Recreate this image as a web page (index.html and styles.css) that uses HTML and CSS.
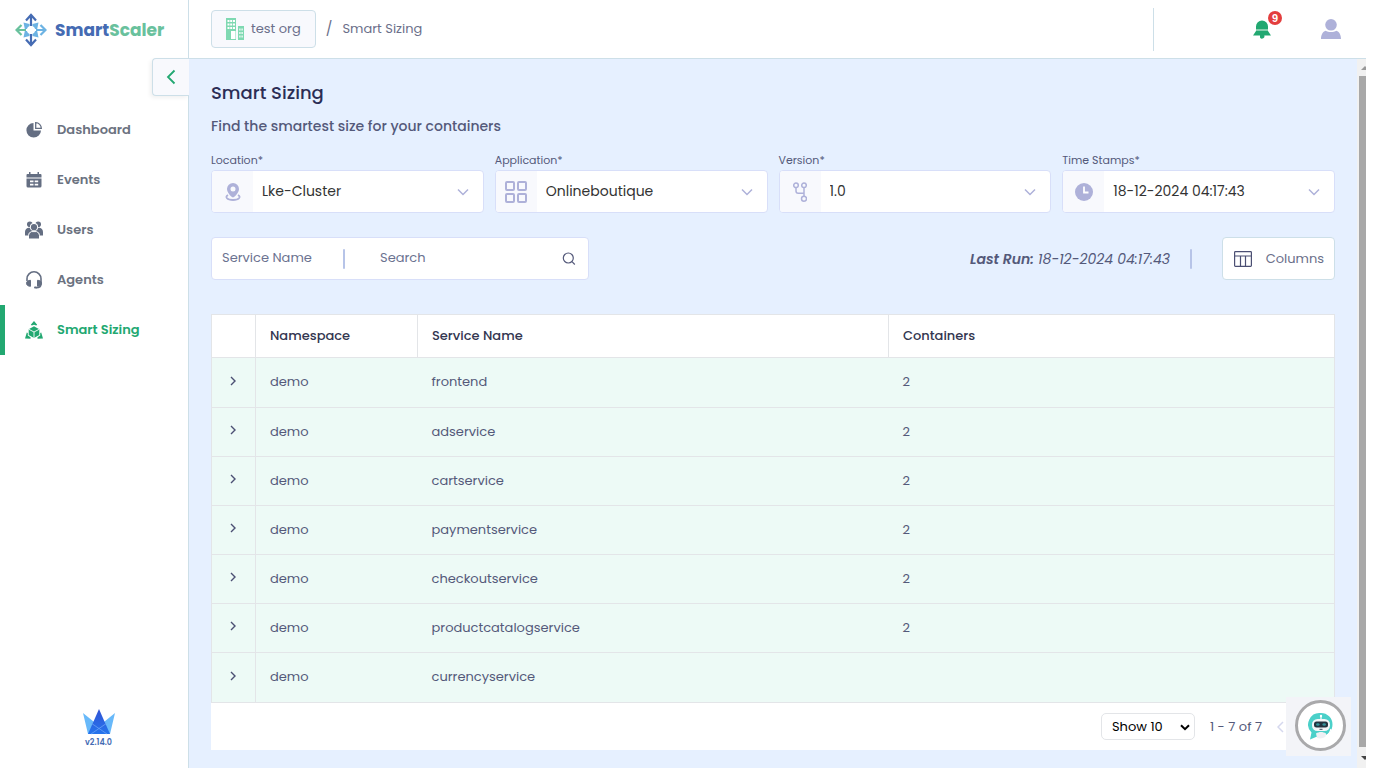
FILE: index.html
```html
<!DOCTYPE html>
<html lang="en">
<head>
<meta charset="utf-8">
<title>SmartScaler - Smart Sizing</title>
<link rel="stylesheet" href="styles.css">
</head>
<body>
<div class="app">
  <aside class="sidebar">
    <a class="logo" href="#">
      <svg width="32" height="34" viewBox="0 0 32 34" fill="none" stroke-width="2.2">
        <path fill="#6db3e3" d="M8.500 9.500l6 1.500v3l-2.500 2H9.800zM23.500 9.500l-6 1.500v3l2.500 2h2.200zM8.500 24.500l6-1.500v-3L12 18H9.800zM23.500 24.500l-6-1.500v-3l2.500-2h2.200z"/>
        <circle cx="16" cy="17" r="4" fill="#fff"/>
        <path stroke="#456bb3" d="M16 13V2M11 7.500l5-5.500 5 5.500M16 21v11M11 26.500l5 5.500 5-5.500"/>
        <path stroke="#69c19d" d="M11 17H1.500M6.500 12l-5 5 5 5"/>
        <path stroke="#6db3e3" d="M21 17h9.500M25.500 12l5 5-5 5"/>
      </svg>
      <span class="logo-text">Smart<span class="logo-accent">Scaler</span></span>
    </a>
    <nav class="nav">
      <a class="nav-item" href="#">
        <svg width="18" height="18" viewBox="0 0 18 18"><path fill="#646e82" d="M8.500 2v7.500H16A7.300 7.300 0 1 1 8.500 2z"/><path fill="none" stroke="#646e82" stroke-width="1.300" d="M10.700 1.700v5.600h5.600a5.600 5.600 0 0 0-5.600-5.600z"/></svg>
        Dashboard</a>
      <a class="nav-item" href="#">
        <svg width="18" height="18" viewBox="0 0 18 18" fill="#646e82"><path d="M4 1h1.500v2h7V1H14v2h1.500a1 1 0 0 1 1 1v2.500h-15V4a1 1 0 0 1 1-1H4z"/><path fill-rule="evenodd" d="M1.500 7.500h15V15a1.500 1.500 0 0 1-1.500 1.500H3A1.500 1.500 0 0 1 1.500 15zM5 9.500v1.800h3.500V9.500zm4.700 0v1.800h3.500V9.500zM5 12.700v1.800h3.500v-1.800zm4.700 0v1.800h3.500v-1.800z"/></svg>
        Events</a>
      <a class="nav-item" href="#">
        <svg width="18" height="18" viewBox="0 0 18 18" fill="#646e82"><circle cx="4.800" cy="3.300" r="2.800"/><circle cx="13.200" cy="3.300" r="2.800"/><path d="M0 14.500V11c0-2.300 1.300-4 3.500-4.300h11C16.700 7 18 8.700 18 11v3.500z"/><circle cx="9" cy="6" r="4.100" fill="#fff"/><circle cx="9" cy="6.200" r="3.100"/><path stroke="#fff" d="M3.500 18v-3.500a4 4 0 0 1 3-3.900h5a4 4 0 0 1 3 3.900V18z"/></svg>
        Users</a>
      <a class="nav-item" href="#">
        <svg width="18" height="18" viewBox="0 0 18 18" fill="none" stroke="#646e82" stroke-width="1.600"><path d="M2 10V7.800a7 7 0 0 1 14 0V13c0 2.500-2 3.700-5 3.700"/><path fill="#646e82" stroke-width="1" d="M5.500 9.300v6C3 15.300 1.500 14 1.500 12.300S3 9.300 5.500 9.300zM12.500 9.300v6c2.500 0 4-1.300 4-3s-1.500-3-4-3z"/><path stroke-width="2" stroke-linecap="round" d="M10 16.600h1"/></svg>
        Agents</a>
      <a class="nav-item active" href="#">
        <svg width="18" height="18" viewBox="0 0 18 18" fill="#22a871"><path d="M9 0l3.200 3.800-1 .7L9 3.800l-2.200.7-1-.7zM1.800 11.500l1 .6v2.500l2.700 1.700v1.500L0 17.500zM16.200 11.500l-1 .6v2.500l-2.700 1.700v1.500l5.500-.3z"/><path d="M9 5.200l5.300 3v5.800L9 17l-5.300-3V8.200z"/><path fill="none" stroke="#fff" stroke-width=".9" d="M3.700 8.200L9 11l5.300-2.800M9 11v6"/></svg>
        Smart Sizing</a>
    </nav>
    <footer class="version">
      <svg width="32" height="26" viewBox="0 0 32 26"><defs><linearGradient id="crown" x1="0" y1="0" x2="0" y2="1"><stop offset="0" stop-color="#3153d5"/><stop offset="1" stop-color="#2675ed"/></linearGradient></defs><path fill="#68b9fa" d="M0 4l16 13L32 4l-5 21H5z"/><path fill="url(#crown)" d="M16 0l11 25H5z"/><path fill="none" stroke="#71a9f7" stroke-width=".7" d="M8 14l16 11M24 14L8 25"/></svg>
      <span>v2.14.0</span>
    </footer>
    <button class="collapse" aria-label="Collapse menu"><svg width="10" height="16" viewBox="0 0 10 16" fill="none" stroke="#22a871" stroke-width="1.800"><path d="M8.500 1.500L2 8l6.500 6.500"/></svg></button>
  </aside>

  <div class="page">
    <header class="topbar">
      <button class="org">
        <svg width="18" height="22" viewBox="0 0 18 22"><path fill="#7fd9b2" d="M0 0h10v22H0zM12 8h6v14h-6z"/><path fill="#fff" d="M1.500 2h2v2h-2zm2.700 0h2v2h-2zM7 2h2v2H7zM1.500 5.500h2v2h-2zm2.700 0h2v2h-2zm2.800 0h2v2H7zM1.500 9h2v2h-2zm2.700 0h2v2h-2zM7 9h2v2H7zm-2 4h4.500v8H5zM13.300 10.500h1.200v2h-1.200zm2.200 0h1.200v2h-1.200zm-2.200 3.500h1.200v2h-1.200zm2.200 0h1.200v2h-1.200zm-2.200 3.500h1.200v2h-1.200zm2.200 0h1.200v2h-1.200z"/></svg>
        test org
      </button>
      <span class="slash">/</span>
      <a class="crumb" href="#">Smart Sizing</a>
      <div class="account">
        <button class="icon-button bell" aria-label="Notifications, 9 unread">
          <svg width="18" height="20" viewBox="0 0 18 20"><path fill="#22a871" d="M3 10V7.500a6 6 0 0 1 12 0V10zM3 12h12l3 4.500H0zM7 16h4a2 2 0 0 1-4 2.500z"/><path fill="#86cfae" d="M3 10h12v2H3z"/></svg>
          <span class="badge">9</span>
        </button>
        <button class="icon-button" aria-label="Account"><svg width="20" height="20" viewBox="0 0 20 20" fill="#aeb1d9"><circle cx="10" cy="5.800" r="5.800"/><path d="M0 20c0-4.500 2-7.500 4.500-8.300 3 1.800 8 1.800 11 0C18 12.500 20 15.500 20 20z"/></svg></button>
      </div>
    </header>

    <div class="viewport">
      <main class="content">
        <h1>Smart Sizing</h1>
        <p class="lead">Find the smartest size for your containers</p>

        <div class="filters">
          <div class="field">
            <label for="location">Location*</label>
            <div class="picker">
              <span class="picker-icon"><svg width="16" height="18" viewBox="0 0 16 18"><path fill="#aeb1d9" fill-rule="evenodd" d="M8 0a6 6 0 0 1 6 6c0 3.200-3.500 7.500-6 8.500C5.500 13.500 2 9.200 2 6a6 6 0 0 1 6-6zm0 3.500a2.500 2.500 0 1 0 0 5 2.500 2.500 0 0 0 0-5z"/><path fill="none" stroke="#aeb1d9" stroke-width="1.800" d="M3 12c-3.500 2-1 5 5 5s8.500-3 5-5"/></svg></span>
              <select id="location"><option>Lke-Cluster</option></select>
              <svg class="chevron" width="12" height="8" viewBox="0 0 12 8"><path d="M1 1.500l5 5 5-5"/></svg>
            </div>
          </div>
          <div class="field">
            <label for="application">Application*</label>
            <div class="picker">
              <span class="picker-icon"><svg width="22" height="22" viewBox="0 0 22 22" fill="none" stroke="#aeb1d9" stroke-width="2"><rect x="1" y="1" width="8" height="8" rx="1"/><rect x="13" y="1" width="8" height="8" rx="1"/><rect x="1" y="13" width="8" height="8" rx="1"/><rect x="13" y="13" width="8" height="8" rx="1"/></svg></span>
              <select id="application"><option>Onlineboutique</option></select>
              <svg class="chevron" width="12" height="8" viewBox="0 0 12 8"><path d="M1 1.500l5 5 5-5"/></svg>
            </div>
          </div>
          <div class="field">
            <label for="version">Version*</label>
            <div class="picker">
              <span class="picker-icon"><svg width="14" height="20" viewBox="0 0 14 20" fill="none" stroke="#aeb1d9" stroke-width="1.500"><circle cx="3" cy="3.300" r="2.300"/><circle cx="11" cy="3.300" r="2.300"/><circle cx="11" cy="16.700" r="2.500"/><path d="M3 5.600V9c0 1.500.8 2.300 2.300 2.300H11M11 5.600v8.500"/></svg></span>
              <select id="version"><option>1.0</option></select>
              <svg class="chevron" width="12" height="8" viewBox="0 0 12 8"><path d="M1 1.500l5 5 5-5"/></svg>
            </div>
          </div>
          <div class="field">
            <label for="stamps">Time Stamps*</label>
            <div class="picker">
              <span class="picker-icon"><svg width="18" height="18" viewBox="0 0 18 18"><circle cx="9" cy="9" r="9" fill="#aeb1d9"/><path fill="none" stroke="#fff" stroke-width="1.800" d="M9 3.500v6h4.500"/></svg></span>
              <select id="stamps"><option>18-12-2024 04:17:43</option></select>
              <svg class="chevron" width="12" height="8" viewBox="0 0 12 8"><path d="M1 1.500l5 5 5-5"/></svg>
            </div>
          </div>
        </div>

        <div class="toolbar">
          <form class="search">
            <select class="search-by" aria-label="Search by"><option>Service Name</option></select>
            <span class="divider"></span>
            <input class="search-input" type="text" placeholder="Search" aria-label="Search">
            <svg width="14" height="14" viewBox="0 0 14 14" fill="none" stroke="#54597a" stroke-width="1.200"><circle cx="6.300" cy="6" r="5"/><path d="M10 9.700l2.800 2.800"/></svg>
          </form>
          <p class="last-run"><strong>Last Run:</strong> 18-12-2024 04:17:43</p>
          <span class="divider"></span>
          <button class="columns">
            <svg width="18" height="16" viewBox="0 0 18 16" fill="none" stroke="#4b4f73" stroke-width="1.200"><rect x=".6" y=".6" width="16.800" height="14.800" rx=".8"/><path d="M.6 5h16.800M6.500 5v10.400M11.500 5v10.400"/></svg>
            Columns
          </button>
        </div>

        <div class="panel">
          <table>
            <colgroup><col class="col-toggle"><col class="col-namespace"><col class="col-service"><col></colgroup>
            <thead><tr><th aria-label="Expand"></th><th>Namespace</th><th>Service Name</th><th>Containers</th></tr></thead>
            <tbody>
              <tr><td><button class="expand" aria-label="Expand frontend"><svg width="6" height="10" viewBox="0 0 6 10"><path d="M1 1l4 4-4 4"/></svg></button></td><td>demo</td><td>frontend</td><td>2</td></tr>
              <tr><td><button class="expand" aria-label="Expand adservice"><svg width="6" height="10" viewBox="0 0 6 10"><path d="M1 1l4 4-4 4"/></svg></button></td><td>demo</td><td>adservice</td><td>2</td></tr>
              <tr><td><button class="expand" aria-label="Expand cartservice"><svg width="6" height="10" viewBox="0 0 6 10"><path d="M1 1l4 4-4 4"/></svg></button></td><td>demo</td><td>cartservice</td><td>2</td></tr>
              <tr><td><button class="expand" aria-label="Expand paymentservice"><svg width="6" height="10" viewBox="0 0 6 10"><path d="M1 1l4 4-4 4"/></svg></button></td><td>demo</td><td>paymentservice</td><td>2</td></tr>
              <tr><td><button class="expand" aria-label="Expand checkoutservice"><svg width="6" height="10" viewBox="0 0 6 10"><path d="M1 1l4 4-4 4"/></svg></button></td><td>demo</td><td>checkoutservice</td><td>2</td></tr>
              <tr><td><button class="expand" aria-label="Expand productcatalogservice"><svg width="6" height="10" viewBox="0 0 6 10"><path d="M1 1l4 4-4 4"/></svg></button></td><td>demo</td><td>productcatalogservice</td><td>2</td></tr>
              <tr><td><button class="expand" aria-label="Expand currencyservice"><svg width="6" height="10" viewBox="0 0 6 10"><path d="M1 1l4 4-4 4"/></svg></button></td><td>demo</td><td>currencyservice</td><td></td></tr>
            </tbody>
          </table>
          <div class="pager">
            <div class="page-size">
              <select aria-label="Rows per page"><option>Show 10</option></select>
              <svg class="caret" width="10" height="7" viewBox="0 0 10 7"><path d="M1 1.200l4 4 4-4"/></svg>
            </div>
            <span>1 - 7 of 7</span>
            <button class="previous" aria-label="Previous page"><svg width="7" height="12" viewBox="0 0 7 12"><path d="M6 1L1 6l5 5"/></svg></button>
          </div>
        </div>
      </main>

      <div class="scrollbar" aria-hidden="true">
        <span class="scroll-arrow up"></span>
        <span class="scroll-thumb"></span>
        <span class="scroll-arrow down"></span>
      </div>

      <div class="chat">
        <button class="chat-button" aria-label="Open chat">
          <svg width="26" height="28" viewBox="0 0 26 28"><path fill="#4bd0c9" d="M13 1a11.500 11.500 0 0 1 11.500 11.500C24.500 19 20 24 13 24l-5 1-6 2.500 1.500-7A11.500 11.500 0 0 1 13 1z"/><path stroke="#fff" stroke-width="1.200" d="M13 3.500V8"/><circle cx="13" cy="4" r="1.200" fill="#fff"/><rect x="4" y="7" width="18" height="12" rx="5.500" fill="#f4f6f8"/><rect x="6" y="9.500" width="14" height="6" rx="2.500" fill="#22333f"/><ellipse cx="9.800" cy="12.500" rx="1.800" ry="1.200" fill="#35929a"/><ellipse cx="16.200" cy="12.500" rx="1.800" ry="1.200" fill="#35929a"/><path fill="none" stroke="#34475a" d="M11.500 17.300h3"/><path fill="#eef0f4" d="M8 21.500c3-2 7-2 10 0v3c-3 2-6 2.500-9 1.500z"/><path fill="none" stroke="#fff" stroke-width="1.200" d="M23 17c-1 4-3 6-5.500 7.500"/></svg>
        </button>
      </div>
    </div>
  </div>
</div>
</body>
</html>
```

FILE: styles.css
```css
* { box-sizing: border-box; }

body {
  margin: 0;
  height: 100vh;
  padding: 0 9px 14px 0;
  background: #fff;
  color: #54597a;
  font-family: Poppins, Inter, "Open Sans", sans-serif;
  font-size: 13px;
  line-height: 20px;
}

button, input, select { font: inherit; color: inherit; }
button { cursor: pointer; padding: 0; border: 0; background: none; }
a { color: inherit; text-decoration: none; }
svg { display: block; flex: none; }
select { appearance: none; border: 0; background: none; outline: 0; }

.app { display: flex; height: 100%; }

.sidebar {
  position: relative;
  display: flex;
  flex-direction: column;
  flex: none;
  width: 189px;
  border-right: 1px solid #cddfe8;
}
.logo {
  display: flex;
  align-items: center;
  gap: 8px;
  height: 60px;
  padding-left: 15px;
}
.logo-text {
  color: #456bb3;
  font-size: 17px;
  font-weight: 700;
}
.logo-accent { color: #69c19d; }
.nav { padding-top: 45px; }
.nav-item {
  display: flex;
  align-items: center;
  gap: 14px;
  height: 50px;
  padding-left: 20px;
  border-left: 5px solid transparent;
  color: #6b7280;
  font-weight: 600;
}
.nav-item.active { border-color: #22a871; color: #22a871; }
.version {
  display: flex;
  flex-direction: column;
  align-items: center;
  margin-top: auto;
  padding: 0 0 17px 9px;
  color: #456bb3;
  font-size: 8px;
  font-weight: 600;
  line-height: 16px;
}
.collapse {
  position: absolute;
  top: 58px;
  right: -1px;
  z-index: 1;
  display: flex;
  align-items: center;
  justify-content: center;
  width: 37px;
  height: 38px;
  border: 1px solid #cddfe8;
  border-right: 0;
  border-radius: 4px 0 0 4px;
  background: #f8f9fd;
  box-shadow: -2px 2px 4px rgba(0, 0, 0, .06);
}

.page { display: flex; flex: 1; flex-direction: column; min-width: 0; }
.topbar {
  display: flex;
  align-items: center;
  flex: none;
  height: 59px;
  padding: 0 25px 0 22px;
  border-bottom: 1px solid #cddfe8;
  color: #6b6f8a;
}
.org {
  display: flex;
  align-items: center;
  gap: 7px;
  height: 38px;
  padding: 0 14px;
  border: 1px solid #cddfe8;
  border-radius: 4px;
  background: #f8f9fd;
}
.slash { margin: 0 10px; font-size: 14px; }
.account {
  display: flex;
  align-items: center;
  justify-content: flex-end;
  gap: 50px;
  width: 188px;
  height: 43px;
  margin-left: auto;
  border-left: 1px solid #cddfe8;
}
.icon-button { position: relative; }
.badge {
  position: absolute;
  top: -8px;
  right: -11px;
  width: 14px;
  height: 14px;
  border-radius: 50%;
  background: #e33e3e;
  color: #fff;
  font-family: "Liberation Sans", sans-serif;
  font-size: 11px;
  font-weight: 700;
  line-height: 14px;
}

.viewport {
  position: relative;
  display: flex;
  flex: 1;
  min-height: 0;
  overflow: hidden;
  background: #e6f0ff;
}
.content { flex: 1; min-width: 0; padding: 22px; }
h1 {
  margin: 0;
  color: #2b2d55;
  font-size: 18px;
  font-weight: 500;
  line-height: 24px;
}
.lead {
  margin: 11px 0 14px;
  font-size: 14px;
  font-weight: 500;
}
.filters {
  display: grid;
  grid-template-columns: repeat(4, 1fr);
  gap: 11px;
}
.field label { display: block; font-size: 11px; }
.picker {
  position: relative;
  display: flex;
  height: 43px;
  overflow: hidden;
  border: 1px solid #d8dff9;
  border-radius: 4px;
  background: #fff;
}
.picker-icon {
  display: flex;
  align-items: center;
  justify-content: center;
  flex: none;
  width: 41px;
  background: #f8f9fd;
}
.picker select {
  flex: 1;
  min-width: 0;
  padding: 0 32px 2px 9px;
  color: #333;
  font-size: 14px;
}
.chevron {
  position: absolute;
  top: 17px;
  right: 14px;
  pointer-events: none;
}
.chevron path { fill: none; stroke: #aeb1d9; stroke-width: 1.5; }

.toolbar { display: flex; align-items: center; margin: 24px 0 34px; }
.search {
  display: flex;
  align-items: center;
  width: 378px;
  height: 43px;
  padding: 0 12px 0 10px;
  border: 1px solid #d8dff9;
  border-radius: 4px;
  background: #fff;
  color: #6b7290;
}
.search-by { width: 121px; padding: 0 0 2px; }
.search-input {
  flex: 1;
  min-width: 0;
  padding: 0 0 2px 35px;
  border: 0;
  outline: 0;
  background: none;
}
.search-input::placeholder { color: #6b7290; opacity: 1; }
.divider {
  flex: none;
  width: 2px;
  height: 20px;
  border-radius: 1px;
  background: #b7c4e8;
}
.last-run {
  margin: 0 20px 0 auto;
  font-size: 14px;
  font-style: italic;
}
.last-run strong { font-weight: 600; }
.columns {
  display: flex;
  align-items: center;
  justify-content: space-between;
  width: 113px;
  height: 43px;
  margin-left: 30px;
  padding: 0 10px 0 11px;
  border: 1px solid #cddfe8;
  border-radius: 4px;
  background: #fff;
  color: #6b6f8a;
}

.panel { background: #fff; }
table {
  width: 100%;
  border-collapse: collapse;
  table-layout: fixed;
  border: 1px solid #e3e5e8;
}
.col-toggle { width: 44px; }
.col-namespace { width: 162px; }
.col-service { width: 471px; }
th {
  height: 43px;
  padding: 0 14px;
  border: 1px solid #e3e5e8;
  color: #333650;
  font-weight: 500;
  text-align: left;
}
td {
  height: 49px;
  padding: 0 14px 1px;
  border-bottom: 1px solid #e3e5e8;
  background: #edfaf6;
}
tr:first-child td, tr:last-child td { height: 50px; }
td:first-child { padding: 0 13px 4px; border-right: 1px solid #e3e5e8; }
.expand {
  display: flex;
  align-items: center;
  justify-content: center;
  width: 16px;
  height: 20px;
}
.expand path { fill: none; stroke: #4b4f73; stroke-width: 1.4; }
.pager {
  display: flex;
  align-items: center;
  justify-content: flex-end;
  gap: 15px;
  height: 47px;
  padding-right: 51px;
}
.page-size { position: relative; }
.page-size select {
  display: block;
  width: 94px;
  height: 27px;
  padding: 0 10px;
  border: 1px solid #e3e5e8;
  border-radius: 5px;
  color: #000;
}
.caret { position: absolute; top: 11px; right: 5px; pointer-events: none; }
.caret path { fill: none; stroke: #000; stroke-width: 2; }
.previous path { fill: none; stroke: #d5d8ee; stroke-width: 1.5; }

.scrollbar {
  display: flex;
  flex: none;
  flex-direction: column;
  align-items: flex-end;
  width: 9px;
  overflow: hidden;
  background: #f1f1f1;
}
.scroll-thumb { flex: 1; width: 7px; background: #a8a8a8; }
.scroll-arrow {
  height: 4px;
  margin: 7px 0 6px 4px;
  align-self: flex-start;
  border: 4px solid transparent;
  border-top: 0;
  border-bottom-color: #999;
}
.scroll-arrow.down {
  margin: 9px 0 8px 4px;
  border-top: 4px solid #444;
  border-bottom: 0;
}
.chat {
  position: absolute;
  right: 15px;
  bottom: 12px;
  display: flex;
  align-items: center;
  justify-content: center;
  width: 65px;
  height: 59px;
  padding: 0 0 2px 4px;
  background: #f3f4f8;
}
.chat-button {
  display: flex;
  align-items: center;
  justify-content: center;
  width: 51px;
  height: 51px;
  border: 3px solid #a9a9ab;
  border-radius: 50%;
  background: #fff;
}
```
